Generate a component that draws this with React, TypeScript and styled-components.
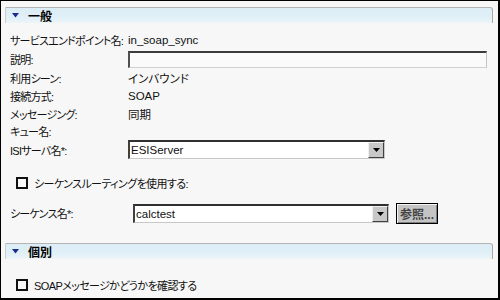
import React from 'react';
import styled, {createGlobalStyle} from 'styled-components';

const GlobalStyle = createGlobalStyle`
  body {
    margin: 0;
    font-family: "Liberation Sans", "Noto Sans CJK JP", sans-serif;
    font-size: 11px;
    color: #111;
  }
`;

const Triangle = () => (
  <svg width="7" height="5" viewBox="0 0 7 5">
    <polygon points="0,0 7,0 3.5,4.5" fill="#1c2c8c" />
  </svg>
);

const DropArrow = () => (
  <svg width="7" height="4" viewBox="0 0 7 4">
    <polygon points="0,0 7,0 3.5,4" fill="#000" />
  </svg>
);

const Section = ({title}: {title: string}) => (
  <Styled.Header>
    <Triangle />
    <Styled.HeaderTitle>{title}</Styled.HeaderTitle>
  </Styled.Header>
);

const Select = ({value, width}: {value: string; width: number}) => (
  <Styled.Select $w={width}>
    <Styled.SelectText>{value}</Styled.SelectText>
    <Styled.DropButton>
      <DropArrow />
    </Styled.DropButton>
  </Styled.Select>
);

const infoRows: [string, string, number][] = [
  ['利用シーン:', 'インバウンド', 18],
  ['接続方式:', 'SOAP', 18],
  ['メッセージング:', '同期', 17],
  ['キュー名:', '', 17],
];

export default function App() {
  return (
    <>
      <GlobalStyle />
      <Styled.Frame>
        <Section title="一般" />
        <Styled.Fields>
          <Styled.Row $h={18}>
            <Styled.Label>サービスエンドポイント名:</Styled.Label>
            <Styled.Value>in_soap_sync</Styled.Value>
          </Styled.Row>
          <Styled.Row $h={20}>
            <Styled.Label>説明:</Styled.Label>
            <Styled.TextBox />
          </Styled.Row>
          {infoRows.map(([label, value, h]) => (
            <Styled.Row key={label} $h={h}>
              <Styled.Label>{label}</Styled.Label>
              <Styled.Value>{value}</Styled.Value>
            </Styled.Row>
          ))}
          <Styled.Row $h={21}>
            <Styled.Label>ISIサーバ名*:</Styled.Label>
            <Select value="ESIServer" width={257} />
          </Styled.Row>
        </Styled.Fields>
        <Styled.CheckRow $top={14}>
          <Styled.Checkbox />
          <span>シーケンスルーティングを使用する:</span>
        </Styled.CheckRow>
        <Styled.SeqRow>
          <Styled.Label>シーケンス名*:</Styled.Label>
          <Select value="calctest" width={256} />
          <Styled.Button>参照...</Styled.Button>
        </Styled.SeqRow>
        <Styled.Spacer />
        <Section title="個別" />
        <Styled.CheckRow $top={17}>
          <Styled.Checkbox />
          <span>SOAPメッセージかどうかを確認する</span>
        </Styled.CheckRow>
      </Styled.Frame>
    </>
  );
}

const Styled = {
  Frame: styled.div`
    width: 500px;
    height: 300px;
    box-sizing: border-box;
    border: 1px solid #000;
    border-right-width: 2px;
    border-bottom-width: 2px;
    background: #f7f7f7;
    padding-top: 6px;
    overflow: hidden;
    font-feature-settings: "palt";
  `,
  Header: styled.div`
    margin: 0 5px 0 4px;
    height: 15px;
    display: flex;
    align-items: center;
    padding-left: 6px;
    border-top: 1px solid #b4b4b4;
    border-left: 1px solid #cccccc;
    border-right: 1px solid #a8a8a8;
    border-top-right-radius: 3px;
    background: linear-gradient(#dcedf6, #e2f0f7 70%, #eef5f9);
  `,
  HeaderTitle: styled.span`
    margin-left: 9px;
    font-weight: bold;
    font-size: 12px;
    color: #000;
  `,
  Fields: styled.div`
    margin-top: 8px;
    padding-left: 9px;
  `,
  Row: styled.div<{$h: number}>`
    height: ${p => p.$h}px;
    display: grid;
    grid-template-columns: 118px 1fr;
    align-items: center;
  `,
  Label: styled.span`
    white-space: nowrap;
    letter-spacing: -0.75px;
  `,
  Value: styled.span`
    white-space: nowrap;
    font-size: 11.5px;
  `,
  TextBox: styled.div`
    width: 359px;
    height: 17px;
    box-sizing: border-box;
    background: #fafafa;
    border-top: 2px solid #3c3c3c;
    border-left: 2px solid #505050;
    border-right: 1px solid #c4c4c4;
    border-bottom: 1px solid #d0d0d0;
  `,
  Select: styled.div<{$w: number}>`
    width: ${p => p.$w}px;
    height: 19px;
    box-sizing: border-box;
    display: flex;
    align-items: stretch;
    background: #fff;
    border-top: 2px solid #303030;
    border-left: 2px solid #404040;
    border-right: 1px solid #c8c8c8;
    border-bottom: 1px solid #c8c8c8;
  `,
  SelectText: styled.span`
    flex: 1;
    display: flex;
    align-items: center;
    padding-left: 1px;
    font-size: 11.5px;
  `,
  DropButton: styled.span`
    width: 16px;
    box-sizing: border-box;
    display: flex;
    align-items: center;
    justify-content: center;
    background: #c8c8c8;
    border-top: 1px solid #f0f0f0;
    border-left: 1px solid #f0f0f0;
    border-right: 1px solid #404040;
    border-bottom: 1px solid #404040;
  `,
  CheckRow: styled.div<{$top: number}>`
    margin-top: ${p => p.$top}px;
    padding-left: 15px;
    height: 18px;
    display: flex;
    align-items: center;
    gap: 6px;
    white-space: nowrap;
    letter-spacing: -0.6px;
  `,
  Checkbox: styled.span`
    width: 12px;
    height: 12px;
    box-sizing: border-box;
    border: 2px solid #111;
    background: #fafafa;
  `,
  SeqRow: styled.div`
    margin-top: 10px;
    padding-left: 9px;
    height: 22px;
    display: grid;
    grid-template-columns: 116px 256px 42px;
    column-gap: 7px;
    align-items: center;
  `,
  Button: styled.div`
    height: 21px;
    box-sizing: border-box;
    display: flex;
    align-items: center;
    justify-content: center;
    background: #c4c4c4;
    border: 1px solid #000;
    box-shadow: inset 1px 1px 0 #f4f4f4, inset -1px -1px 0 #808080;
    font-weight: bold;
    font-size: 12px;
    color: #444;
  `,
  Spacer: styled.div`
    height: 19px;
  `,
};
